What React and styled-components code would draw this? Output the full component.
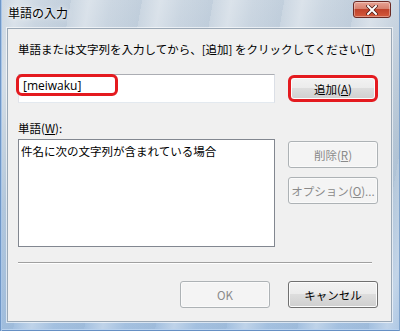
import React from 'react';
import styled, { createGlobalStyle } from 'styled-components';

const Global = createGlobalStyle`
  html, body {
    margin: 0;
    padding: 0;
    background: #ffffff;
  }
  body {
    font-family: "Noto Sans CJK JP", "Noto Sans", sans-serif;
  }
`;

const Frame = styled.div`
  width: 400px;
  height: 331px;
  box-sizing: border-box;
  display: flex;
  flex-direction: column;
  padding: 0 8px 9px 7px;
  background:
    repeating-linear-gradient(
      100deg,
      rgba(255, 255, 255, 0) 0px,
      rgba(255, 255, 255, 0.3) 18px,
      rgba(255, 255, 255, 0) 40px,
      rgba(120, 150, 180, 0.12) 70px
    ),
    linear-gradient(180deg, #ccd7e2 0%, #bccbd9 40%, #a3c0e0 100%);
  box-shadow: inset 1px 0 0 #6f97c8, inset 2px 0 0 #a9c6e8, inset -1px 0 0 #7fa3cc,
    inset 0 -1px 0 #6690c4, inset 0 -2px 0 #b9d2ee;
`;

const TitleBar = styled.div`
  height: 28px;
  display: flex;
  align-items: flex-start;
  justify-content: space-between;
  padding: 0 1px;
`;

const Title = styled.div`
  margin-top: 5px;
  font-size: 12px;
  line-height: 16px;
  color: #000;
  text-shadow: 0 0 6px rgba(255, 255, 255, 0.9), 0 0 3px rgba(255, 255, 255, 0.9);
`;

const CloseButton = styled.div`
  width: 38px;
  height: 17px;
  margin-top: 1px;
  box-sizing: border-box;
  border: 1px solid #6b2a24;
  border-radius: 3px;
  background: linear-gradient(180deg, #e8a394 0%, #d7826f 45%, #c0432b 50%, #d45a3c 100%);
  box-shadow: inset 0 0 0 1px rgba(255, 255, 255, 0.35);
  display: flex;
  align-items: center;
  justify-content: center;
`;

const Client = styled.div`
  flex: 1;
  display: flex;
  flex-direction: column;
  background: #f0f0f0;
  border: 1px solid #9aa8b6;
  box-shadow: 0 0 0 1px rgba(255, 255, 255, 0.6);
  padding: 12px 13px 0 10px;
  font-size: 11.5px;
  color: #000;
`;

const Label = styled.div`
  line-height: 16px;
  height: 16px;
  white-space: nowrap;
  margin-top: ${(p) => p.top || 0}px;
`;

const Row = styled.div`
  display: flex;
  gap: 13px;
  margin-top: ${(p) => p.top || 0}px;
`;

const TextField = styled.div`
  position: relative;
  width: 257px;
  height: 29px;
  box-sizing: border-box;
  background: #fff;
  border: 1px solid #e3e9ef;
  border-top-color: #abadb3;
  border-left-color: #e2e3ea;
  border-right-color: #dbdfe6;
  padding: 2px 0 0 4px;
  font-family: "Open Sans", "Noto Sans CJK JP", sans-serif;
  font-size: 12px;
  line-height: 17px;
`;

const Highlight = styled.div`
  position: absolute;
  left: -3px;
  top: -1px;
  width: 102px;
  height: 22px;
  box-sizing: border-box;
  border: 3px solid #e41a1f;
  border-radius: 6px;
`;

const ListBox = styled.div`
  width: 257px;
  height: 108px;
  box-sizing: border-box;
  background: #fff;
  border: 1px solid #828790;
  padding: 3px 2px;
  line-height: 16px;
`;

const ButtonColumn = styled.div`
  display: flex;
  flex-direction: column;
  gap: 9px;
  padding-top: ${(p) => p.top || 0}px;
`;

const Button = styled.div`
  width: 90px;
  height: 27px;
  box-sizing: border-box;
  display: flex;
  align-items: center;
  justify-content: center;
  white-space: nowrap;
  border-radius: ${(p) => (p.marked ? 6 : 3)}px;
  border: ${(p) =>
    p.marked ? '3px solid #e41a1f' : p.disabled ? '1px solid #adb2b5' : '1px solid #707070'};
  color: ${(p) => (p.disabled ? '#8a8a8a' : '#000')};
  background: ${(p) =>
    p.disabled
      ? '#f4f4f4'
      : 'linear-gradient(180deg, #f2f2f2 0%, #ebebeb 49%, #dddddd 50%, #cfcfcf 100%)'};
  box-shadow: inset 0 0 0 1px ${(p) => (p.disabled ? '#fafafa' : '#fcfcfc')};
  line-height: 16px;
`;

const Separator = styled.div`
  height: 1px;
  margin: 15px 6px 0 0;
  background: #a0a0a0;
  box-shadow: 0 1px 0 #ffffff;
`;

const Footer = styled.div`
  display: flex;
  justify-content: flex-end;
  gap: 18px;
  margin-top: 18px;
`;

export default function App() {
  return (
    <>
      <Global />
      <Frame>
        <TitleBar>
          <Title>単語の入力</Title>
          <CloseButton>
            <svg width="12" height="10" viewBox="0 0 12 10">
              <path
                d="M2 1 L10 9 M10 1 L2 9"
                stroke="#4a1a14"
                strokeWidth="3.4"
                strokeLinecap="square"
              />
              <path
                d="M2 1 L10 9 M10 1 L2 9"
                stroke="#ffffff"
                strokeWidth="2"
                strokeLinecap="square"
              />
            </svg>
          </CloseButton>
        </TitleBar>
        <Client>
          <Label>
            単語または文字列を入力してから、[追加] をクリックしてください(<u>T</u>)
          </Label>
          <Row top={17}>
            <TextField>
              [meiwaku]
              <Highlight />
            </TextField>
            <ButtonColumn top={1}>
              <Button marked>
                追加(<u>A</u>)
              </Button>
            </ButtonColumn>
          </Row>
          <Label top={17}>
            単語(<u>W</u>):
          </Label>
          <Row top={3}>
            <ListBox>件名に次の文字列が含まれている場合</ListBox>
            <ButtonColumn top={2}>
              <Button disabled>
                削除(<u>R</u>)
              </Button>
              <Button disabled>
                オプション(<u>O</u>)...
              </Button>
            </ButtonColumn>
          </Row>
          <Separator />
          <Footer>
            <Button disabled>OK</Button>
            <Button>キャンセル</Button>
          </Footer>
        </Client>
      </Frame>
    </>
  );
}
